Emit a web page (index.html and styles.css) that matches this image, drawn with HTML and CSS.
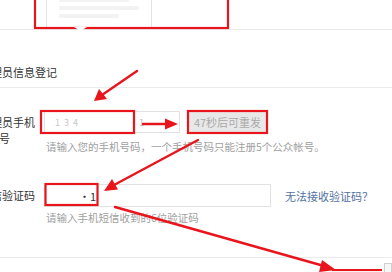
FILE: index.html
```html
<!DOCTYPE html>
<html lang="zh-CN">
<head>
<meta charset="utf-8">
<title>管理员信息登记</title>
<link rel="stylesheet" href="styles.css">
</head>
<body>
<div class="page">
  <div class="top">
    <div class="preview">
      <div class="qr"><span class="blur b1"></span><span class="blur b2"></span><span class="blur b3"></span></div>
    </div>
  </div>
  <div class="section-title">管理员信息登记</div>
  <div class="form">
    <div class="row">
      <div class="label label-wrap"><span class="l1">管理员手机</span><span class="l2">号</span></div>
      <div class="body">
        <div class="field">
          <div class="input input-phone"><span class="masked">1 3 4</span><span class="masked tail">·1</span></div>
          <div class="btn-disabled">47秒后可重发</div>
        </div>
        <div class="hint">请输入您的手机号码，一个手机号码只能注册5个公众帐号。</div>
      </div>
    </div>
    <div class="row row-code">
      <div class="label">短信验证码</div>
      <div class="body">
        <div class="field field-code">
          <div class="input input-code"><span class="code">·1</span></div>
          <a class="link">无法接收验证码？</a>
        </div>
        <div class="hint hint-code">请输入手机短信收到的6位验证码</div>
      </div>
    </div>
  </div>
  <div class="footer">
    <div class="footer-spacer"></div>
    <div class="next-btn"></div>
    <div class="corner"></div>
  </div>
</div>
<svg class="annotations" width="392" height="272" viewBox="0 0 392 272">
  <g fill="none" stroke="#e8151c" stroke-width="2.2">
    <rect x="35" y="-4" width="193" height="32"/>
    <rect x="41" y="111" width="93" height="22"/>
    <rect x="188" y="111" width="79" height="22"/>
    <rect x="45.5" y="184" width="52" height="21"/>
  </g>
  <path d="M74 27 L87 27 L80.5 31 Z" fill="#fff"/>
  <g stroke="#e8151c" stroke-width="2.4" stroke-linecap="round" fill="#e8151c">
    <line x1="137" y1="71" x2="102" y2="95"/>
    <path d="M94 101 L99 89 L107 99 Z" stroke="none"/>
    <line x1="143" y1="124" x2="167" y2="124"/>
    <path d="M178 124 L165 118.5 L165 129.5 Z" stroke="none"/>
    <line x1="198" y1="140" x2="114" y2="185"/>
    <path d="M104 191 L112 179 L118 189.5 Z" stroke="none"/>
    <line x1="115" y1="207" x2="324" y2="266"/>
    <path d="M336 270 L322 260 L319 272 Z" stroke="none"/>
  </g>
</svg>
</body>
</html>
```
FILE: styles.css
```css
* { box-sizing: border-box; }
html, body {
  margin: 0;
  padding: 0;
  width: 392px;
  height: 272px;
  overflow: hidden;
  background: #fff;
}
body {
  position: relative;
  font-family: "Noto Sans CJK SC", "Noto Sans", sans-serif;
  font-size: 11px;
  color: #333;
}
.page {
  margin-left: -20px;
  width: 412px;
}
.top {
  height: 30px;
  border-bottom: 1px solid #ececec;
  display: flex;
  align-items: flex-end;
}
.preview {
  margin-left: 66px;
  width: 106px;
  height: 40px;
  margin-bottom: 1px;
  border-left: 1px solid #e4e4e4;
  border-right: 1px solid #e4e4e4;
  position: relative;
  overflow: hidden;
}
.qr {
  display: flex;
  flex-direction: column;
  gap: 4px;
  padding: 10px 12px 0;
}
.blur {
  display: block;
  height: 4px;
  background: #f3f3f3;
  border-radius: 2px;
}
.b1 { width: 70px; }
.b2 { width: 80px; }
.b3 { width: 60px; }
.section-title {
  padding-top: 34px;
  padding-bottom: 7px;
  line-height: 16px;
  height: 58px;
  border-bottom: 1px solid #ececec;
  color: #333;
  font-size: 11px;
}
.form {
  padding-top: 23px;
  display: flex;
  flex-direction: column;
  gap: 29px;
}
.row {
  display: flex;
  gap: 9px;
}
.label {
  width: 55px;
  flex: none;
  line-height: 16px;
  padding-top: 3px;
  color: #333;
  white-space: nowrap;
  overflow: hidden;
}
.label-wrap {
  display: flex;
  flex-direction: column;
}
.l2 {
  margin-left: 19px;
}
.body {
  display: flex;
  flex-direction: column;
}
.field {
  display: flex;
  align-items: center;
  gap: 8px;
  height: 22px;
}
.input {
  height: 22px;
  border: 1px solid #e2e2e2;
  background: #fff;
  display: flex;
  align-items: center;
  position: relative;
}
.input-phone {
  width: 136px;
}
.masked {
  color: #c8c8c8;
  font-size: 9px;
  margin-left: 10px;
  letter-spacing: 1px;
}
.masked.tail {
  margin-left: 50px;
  color: #bbb;
}
.btn-disabled {
  width: 79px;
  height: 22px;
  background: #e8e8e8;
  border: 1px solid #dcdcdc;
  color: #a8a8a8;
  line-height: 20px;
  text-align: center;
  font-size: 11px;
}
.hint {
  margin-top: 6px;
  margin-left: 2px;
  line-height: 16px;
  color: #a0a0a0;
  font-size: 10.5px;
  white-space: nowrap;
}
.field-code {
  height: 23px;
  gap: 14px;
}
.input-code {
  width: 227px;
  height: 23px;
}
.code {
  margin-left: 34px;
  color: #333;
  font-size: 11px;
}
.link {
  color: #52719f;
  font-size: 11px;
  line-height: 16px;
}
.hint-code {
  margin-top: 3px;
}
.footer {
  margin-top: 31px;
  border-top: 1px solid #ececec;
  display: flex;
  align-items: flex-start;
  height: 20px;
}
.footer-spacer {
  flex: 1;
}
.next-btn {
  width: 50px;
  height: 10px;
  margin-top: 11px;
  border-top: 2px solid #e8151c;
  background: #fdeeee;
}
.corner {
  width: 8px;
  height: 10px;
  margin-left: 2px;
  margin-top: 5px;
  border: 1px solid #d0d0d0;
  background: #f6f6f6;
}
.annotations {
  position: absolute;
  left: 0;
  top: 0;
  pointer-events: none;
}
```
